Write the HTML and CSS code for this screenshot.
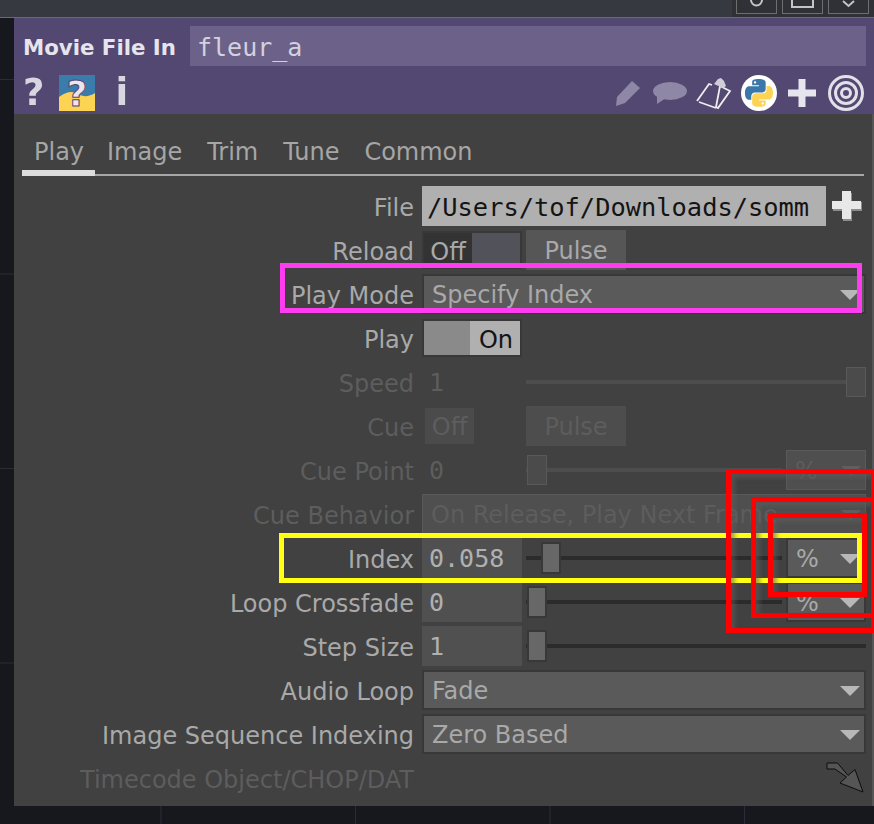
FILE: index.html
```html
<!DOCTYPE html>
<html>
  <head>
    <title>Movie File In</title>
    <meta name="viewport" content="width=device-width, initial-scale=1" />
    <link rel="stylesheet" href="styles.css">
  </head>
  <body>
    <div class="top-bar">
      <div class="top-buttons">
        <div class="top-button">
          <svg width="39" height="12" viewBox="0 0 39 12"><path d="M14 0a5.500 5.500 0 0 0 11 0" fill="none" stroke="#c4c4c4" stroke-width="2"/></svg>
        </div>
        <div class="top-button">
          <svg width="39" height="12" viewBox="0 0 39 12"><path d="M9 0v7h21v-7" fill="none" stroke="#c4c4c4" stroke-width="2"/></svg>
        </div>
        <div class="top-button">
          <svg width="39" height="12" viewBox="0 0 39 12"><path d="M14 1l5.500 5 5.500-5" fill="none" stroke="#c4c4c4" stroke-width="2"/></svg>
        </div>
      </div>
    </div>

    <div class="panel">
      <div class="header">
        <div class="name-row">
          <div class="op-type">Movie File In</div>
          <div class="op-name">fleur_a</div>
        </div>
        <div class="icon-row">
          <div class="icons-left">
            <span class="glyph glyph-help">?</span>
            <svg class="icon-pyhelp" width="36" height="36" viewBox="0 0 36 36">
              <rect width="36" height="36" fill="#3a7cab"/>
              <path d="M0 36V22C8 16 14 16 19 19s11 3 17-1v18z" fill="#fdd353"/>
              <text x="18" y="31" class="pyhelp-mark">?</text>
            </svg>
            <span class="glyph glyph-info">i</span>
          </div>
          <div class="icons-right">
            <svg class="soft" width="28" height="28" viewBox="0 0 28 28">
              <path d="M2 27l1-9L18 2l8 7-15 15z" fill="#8f87a6"/>
            </svg>
            <svg class="soft" width="36" height="24" viewBox="0 0 36 24">
              <ellipse cx="18" cy="10" rx="17" ry="9" fill="#8f87a6"/>
              <path d="M5 14v9l9-6z" fill="#8f87a6"/>
            </svg>
            <svg class="soft icon-clip" width="36" height="33" viewBox="0 0 36 33">
              <path d="M1 24L13 7l3 1M24 9l10 5-12 17-2-1z" fill="none" stroke="#eeeeee" stroke-width="1.800"/>
              <path d="M3 25l17 6" fill="none" stroke="#eeeeee" stroke-width="1.800"/>
              <path d="M18 7l4-5 3-1 3 3 2 5-3 2z" fill="#cfcdd8"/>
            </svg>
            <svg class="icon-python" width="36" height="36" viewBox="0 0 36 36">
              <circle cx="18" cy="18" r="18" fill="#ffffff"/>
              <g transform="translate(4 4) scale(1.16)">
                <path fill="#3a78a9" fill-rule="evenodd" d="M14.25.18l.9.2.73.26.59.3.45.32.34.34.25.34.16.33.1.3.04.26.02.2-.01.13V8.500l-.05.63-.13.55-.21.46-.26.38-.3.31-.33.25-.35.19-.35.14-.33.1-.3.07-.26.04-.21.02H8.770l-.69.05-.59.14-.5.22-.41.27-.33.32-.27.35-.2.36-.15.37-.1.35-.07.32-.04.27-.02.21v3.060H3.170l-.21-.03-.28-.07-.32-.12-.35-.18-.36-.26-.36-.36-.35-.46-.32-.59-.28-.73-.21-.88-.14-1.050-.05-1.230.06-1.220.16-1.040.24-.87.32-.71.36-.57.4-.44.42-.33.42-.24.4-.16.36-.1.32-.05.24-.01h.16l.06.01h8.160v-.83H6.180l-.01-2.750-.02-.37.05-.34.11-.31.17-.28.25-.26.31-.23.38-.2.44-.18.51-.15.58-.12.64-.1.71-.06.77-.04.84-.02 1.270.05zm-6.300 1.980l-.23.33-.08.41.08.41.23.34.33.22.41.09.41-.09.33-.22.23-.34.08-.41-.08-.41-.23-.33-.33-.22-.41-.09-.41.09z"/>
                <path fill="#fdd353" fill-rule="evenodd" d="M21.040 6.110l.28.06.32.12.35.18.36.27.36.35.35.47.32.59.28.73.21.88.14 1.040.05 1.230-.06 1.230-.16 1.040-.24.86-.32.71-.36.57-.4.45-.42.33-.42.24-.4.16-.36.09-.32.05-.24.02-.16-.01h-8.220v.82h5.840l.01 2.760.02.36-.05.34-.11.31-.17.29-.25.25-.31.24-.38.2-.44.17-.51.15-.58.13-.64.09-.71.07-.77.04-.84.01-1.270-.04-1.070-.14-.9-.2-.73-.25-.59-.3-.45-.33-.34-.34-.25-.34-.16-.33-.1-.3-.04-.25-.02-.2.01-.13v-5.340l.05-.64.13-.54.21-.46.26-.38.3-.32.33-.24.35-.2.35-.14.33-.1.3-.06.26-.04.21-.02.13-.01h5.840l.69-.05.59-.14.5-.21.41-.28.33-.32.27-.35.2-.36.15-.36.1-.35.07-.32.04-.28.02-.21V6.070h2.090l.14.01zm-6.470 14.250l-.23.33-.08.41.08.41.23.33.33.23.41.08.41-.08.33-.23.23-.33.08-.41-.08-.41-.23-.33-.33-.23-.41-.08-.41.08z"/>
              </g>
            </svg>
            <svg class="soft icon-plus" width="28" height="28" viewBox="0 0 28 28">
              <path d="M10.500 0h7v10.500H28v7H17.500V28h-7V17.500H0v-7h10.500z" fill="#e6e4ec"/>
            </svg>
            <svg class="soft icon-target" width="36" height="36" viewBox="0 0 36 36" fill="none" stroke="#e2e0e8" stroke-width="3">
              <circle cx="18" cy="18" r="16.500"/>
              <circle cx="18" cy="18" r="10.500"/>
              <circle cx="18" cy="18" r="4.500"/>
            </svg>
          </div>
        </div>
      </div>

      <div class="tabs">
        <div class="tab tab-active">Play</div>
        <div class="tab">Image</div>
        <div class="tab">Trim</div>
        <div class="tab">Tune</div>
        <div class="tab">Common</div>
      </div>

      <div class="params">
        <div class="row">
          <div class="label">File</div>
          <div class="file-field">/Users/tof/Downloads/somm</div>
          <svg class="file-plus" width="31" height="30" viewBox="0 0 31 30">
            <path d="M11 2h9v9h10v9H20v10h-9V20H1v-9h10z" fill="#8c8c8c"/>
            <path d="M10 0h9v10h10v8H19v10h-9V18H0v-8h10z" fill="#e8e8e8"/>
          </svg>
        </div>

        <div class="row">
          <div class="label">Reload</div>
          <div class="toggle toggle-off">
            <span class="toggle-text">Off</span>
            <span class="toggle-rest"></span>
          </div>
          <div class="pulse">Pulse</div>
        </div>

        <div class="row">
          <div class="label">Play Mode</div>
          <div class="menu menu-wide">Specify Index<i class="caret"></i></div>
        </div>

        <div class="row">
          <div class="label">Play</div>
          <div class="toggle toggle-on">
            <span class="toggle-rest"></span>
            <span class="toggle-text">On</span>
          </div>
        </div>

        <div class="row row-disabled">
          <div class="label">Speed</div>
          <div class="value">1</div>
          <div class="slider slider-full"><span class="thumb thumb-end"></span></div>
        </div>

        <div class="row row-disabled">
          <div class="label">Cue</div>
          <div class="toggle-plain">Off</div>
          <div class="pulse">Pulse</div>
        </div>

        <div class="row row-disabled">
          <div class="label">Cue Point</div>
          <div class="value">0</div>
          <div class="slider"><span class="thumb"></span></div>
          <div class="menu menu-unit">%<i class="caret"></i></div>
        </div>

        <div class="row row-disabled">
          <div class="label">Cue Behavior</div>
          <div class="menu menu-wide">On Release, Play Next Frame<i class="caret"></i></div>
        </div>

        <div class="row">
          <div class="label">Index</div>
          <div class="value value-box">0.058</div>
          <div class="slider"><span class="thumb thumb-index"></span></div>
          <div class="menu menu-unit">%<i class="caret"></i></div>
        </div>

        <div class="row">
          <div class="label">Loop Crossfade</div>
          <div class="value value-box">0</div>
          <div class="slider"><span class="thumb"></span></div>
          <div class="menu menu-unit">%<i class="caret"></i></div>
        </div>

        <div class="row">
          <div class="label">Step Size</div>
          <div class="value value-box">1</div>
          <div class="slider slider-full"><span class="thumb"></span></div>
        </div>

        <div class="row">
          <div class="label">Audio Loop</div>
          <div class="menu menu-wide">Fade<i class="caret"></i></div>
        </div>

        <div class="row">
          <div class="label">Image Sequence Indexing</div>
          <div class="menu menu-wide">Zero Based<i class="caret"></i></div>
        </div>

        <div class="row row-disabled">
          <div class="label">Timecode Object/CHOP/DAT</div>
          <svg class="drop-arrow" width="38" height="32" viewBox="0 0 38 32">
            <path d="M1 1h10.500L22 13.500 29 7.500 37 30 14 21l6.500-6L9 7H1z" fill="#555555" stroke="#0c0c0c" stroke-width="1"/>
          </svg>
        </div>
      </div>
    </div>

    <!-- markup drawn over the screenshot -->
    <div class="mark mark-pink"></div>
    <div class="mark mark-yellow"></div>
    <div class="mark mark-red mark-red-outer"></div>
    <div class="mark mark-red mark-red-mid"></div>
    <div class="mark mark-red mark-red-inner"></div>
  </body>
</html>
```

FILE: styles.css
```css
/* Page */
html, body {
  margin: 0;
  height: 824px;
  overflow: hidden;
}

body {
  position: relative;
  font-family: "DejaVu Sans", sans-serif;
  font-size: 24px;
  color: #a9a9a9;
  background-color: #17181d;
  background-image:
    linear-gradient(#2a2c33 1px, transparent 1px),
    linear-gradient(90deg, #2a2c3a 1px, transparent 1px);
  background-size: 194.5px 194.5px;
  background-position: -34px 79px;
}

/* Top bar */
.top-bar {
  display: flex;
  justify-content: flex-end;
  height: 17px;
  background-color: #363940;
  border-bottom: 1px solid #6a6c70;
}

.top-buttons {
  display: flex;
  gap: 5px;
  height: 17px;
  padding: 0 5px 0 4px;
  background-color: #2f3136;
}

.top-button {
  width: 41px;
  height: 14px;
  box-sizing: border-box;
  border: 1px solid #6e6e6e;
  border-top: none;
}

.top-button svg {
  display: block;
}

/* Panel */
.panel {
  margin-left: 14px;
  height: 788px;
  background-color: #414141;
  border-right: 2px solid #565656;
}

.header {
  height: 96px;
  margin-right: -2px;
  background-color: #534871;
  box-sizing: border-box;
  padding-top: 8px;
}

.name-row {
  display: flex;
  align-items: center;
  height: 40px;
}

.op-type {
  width: 176px;
  padding: 3px 0 0 9px;
  box-sizing: border-box;
  font-size: 21.300px;
  font-weight: bold;
  color: #e6e4ec;
  white-space: nowrap;
}

.op-name {
  width: 676px;
  height: 40px;
  line-height: 44px;
  padding-left: 7px;
  box-sizing: border-box;
  font-family: "DejaVu Sans Mono", monospace;
  font-size: 25px;
  color: #d4d1de;
  background-color: #6c6189;
}

.icon-row {
  display: flex;
  justify-content: space-between;
  align-items: center;
  height: 48px;
  padding-top: 6px;
  box-sizing: border-box;
}

.icons-left {
  display: flex;
  align-items: center;
  padding-left: 9px;
}

.glyph {
  font-weight: bold;
  font-size: 37px;
  line-height: 40px;
  color: #d8d6e0;
  filter: blur(0.6px);
}

.icon-pyhelp {
  margin-left: 15px;
  overflow: visible;
}

.pyhelp-mark {
  font-family: "DejaVu Sans", sans-serif;
  font-weight: bold;
  font-size: 36px;
  text-anchor: middle;
  fill: #e8e6f0;
  stroke: #534871;
  stroke-width: 1;
}

.glyph-info {
  margin-left: 20px;
}

.icons-right {
  display: flex;
  align-items: center;
  gap: 10px;
  padding-right: 10px;
}

.soft {
  filter: blur(0.6px);
}

.icon-clip {
  margin-left: -2px;
}

.icon-python {
  margin-left: -1px;
}

.icon-plus {
  margin-left: 1px;
}

.icon-target {
  margin-left: 2px;
}

/* Tabs */
.tabs {
  display: flex;
  height: 62px;
  margin: 0 8px;
  box-sizing: border-box;
  border-bottom: 2px solid #a6a6a6;
}

.tab {
  padding: 24px 12px 0 13px;
  line-height: 28px;
  color: #a6a6a6;
}

.tab-active {
  width: 73px;
  padding: 24px 0 0 12px;
  box-sizing: border-box;
  margin-bottom: -2px;
  border-bottom: 6px solid #dcdcdc;
}

.tab-active + .tab {
  padding-left: 12px;
}

/* Parameter rows */
.params {
  padding-top: 8px;
  margin-right: 6px;
}

.row {
  display: flex;
  align-items: center;
  height: 44px;
}

.label {
  width: 400px;
  flex: none;
  margin-right: 8px;
  padding-top: 3px;
  text-align: right;
  white-space: nowrap;
}

.row-disabled .label,
.row-disabled .value,
.row-disabled .menu,
.row-disabled .pulse,
.row-disabled .toggle-plain {
  color: #5d5d5d;
}

.file-field {
  width: 404px;
  height: 40px;
  line-height: 42px;
  padding-left: 5px;
  box-sizing: border-box;
  font-family: "DejaVu Sans Mono", monospace;
  font-size: 25.400px;
  color: #141414;
  background-color: #b0b0b0;
  white-space: nowrap;
}

.file-plus {
  margin-left: 6px;
}

/* Toggles */
.toggle {
  display: flex;
  width: 100px;
  height: 38px;
  box-sizing: border-box;
  border: 2px solid #383838;
}

.toggle-text {
  width: 48px;
  line-height: 38px;
  text-align: center;
}

.toggle-rest {
  flex: 1;
}

.toggle-off .toggle-text {
  background-color: #333333;
}

.toggle-off .toggle-rest {
  background-color: #52525a;
}

.toggle-on .toggle-text {
  color: #141414;
  background-color: #b0b0b0;
  padding-left: 2px;
}

.toggle-on .toggle-rest {
  background-color: #8a8a8a;
}

.toggle-plain {
  width: 49px;
  height: 36px;
  margin-left: 3px;
  line-height: 38px;
  text-align: center;
  background-color: #4b4b4b;
}

.pulse {
  width: 100px;
  height: 40px;
  margin-left: 4px;
  line-height: 42px;
  text-align: center;
  background-color: #565656;
}

.row-disabled .pulse {
  margin-left: 52px;
  background-color: #4d4d4d;
}

/* Menus */
.menu {
  display: flex;
  align-items: center;
  justify-content: space-between;
  height: 40px;
  box-sizing: border-box;
  padding: 2px 4px 0 8px;
  background-color: #5a5a5a;
  border: 2px solid #383838;
  white-space: nowrap;
}

.menu-wide {
  width: 444px;
}

.menu-unit {
  width: 80px;
  margin-left: 4px;
}

.row-disabled .menu {
  background-color: #4f4f4f;
  border-color: #595959;
  border-width: 1px;
}

.caret {
  width: 0;
  height: 0;
  border-left: 10px solid transparent;
  border-right: 10px solid transparent;
  border-top: 10px solid #b8b8b8;
}

.row-disabled .caret {
  border-top-color: #5f5f5f;
}

/* Values and sliders */
.value {
  width: 100px;
  height: 40px;
  flex: none;
  line-height: 42px;
  padding-left: 7px;
  box-sizing: border-box;
  font-family: "DejaVu Sans Mono", monospace;
  font-size: 25px;
  color: #b0b0b0;
}

.value-box {
  background-color: #505050;
}

.slider {
  display: flex;
  align-items: center;
  width: 256px;
  height: 40px;
  margin-left: 4px;
  background: linear-gradient(#2b2b2b, #2b2b2b) center / 100% 4px no-repeat;
}

.slider-full {
  width: 340px;
}

.row-disabled .slider {
  background-image: linear-gradient(#4d4d4d, #4d4d4d);
}

.thumb {
  width: 16px;
  height: 28px;
  margin-left: 1px;
  background-color: #676767;
  border: 2px solid #383838;
}

.thumb-index {
  margin-left: 15px;
}

.thumb-end {
  margin-left: auto;
}

.row-disabled .thumb {
  background-color: #4b4b4b;
  border-color: #585858;
  border-width: 1px;
  width: 18px;
}

.drop-arrow {
  margin-left: 404px;
}

/* Rectangles drawn over the picture */
.mark {
  position: absolute;
  box-sizing: border-box;
  border: 5px solid;
}

.mark-pink {
  left: 280px;
  top: 263px;
  width: 582px;
  height: 50px;
  border-color: #ff3cf0;
}

.mark-yellow {
  left: 279px;
  top: 533px;
  width: 583px;
  height: 50px;
  border-color: #ffff14;
}

.mark-red {
  border-color: #ff0000;
  box-shadow: inset 4px 4px 4px rgba(95, 95, 95, 0.55);
}

.mark-red-outer {
  left: 726px;
  top: 469px;
  width: 150px;
  height: 164px;
}

.mark-red-mid {
  left: 751px;
  top: 497px;
  width: 125px;
  height: 121px;
}

.mark-red-inner {
  left: 768px;
  top: 513px;
  width: 99px;
  height: 84px;
}
```
